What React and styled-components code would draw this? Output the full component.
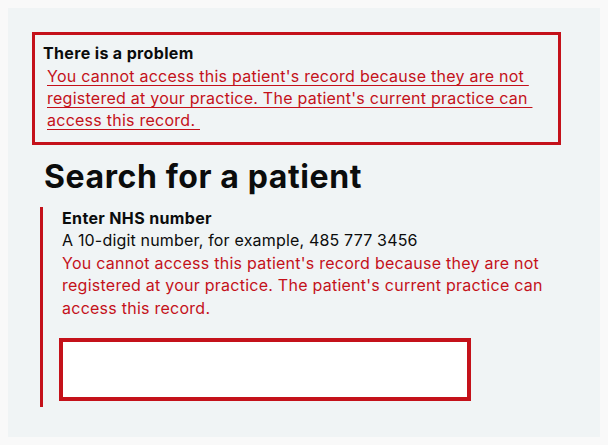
import React from "react";
import styled, { createGlobalStyle } from "styled-components";

const RED = "#c4111a";

const GlobalStyle = createGlobalStyle`
  html, body { background: #f9f9f9; }
  body {
    margin: 8px;
    font-family: Inter, "Liberation Sans", sans-serif;
    color: #0b0c0c;
  }
  * { box-sizing: border-box; }
`;

const Panel = styled.main`
  background: #f0f4f5;
  height: 429px;
  padding: 24px 24px 0 24px;
`;

const ErrorSummary = styled.div`
  width: 529px;
  border: 3px solid ${RED};
  padding: 6px 9px 11px 8px;
`;

const SummaryTitle = styled.h2`
  margin: 0;
  font-size: 16px;
  line-height: 24px;
  font-weight: 700;
  letter-spacing: 0.35px;
`;

const SummaryLink = styled.a`
  display: block;
  margin-left: 4px;
  font-size: 16px;
  line-height: 22px;
  color: ${RED};
  letter-spacing: 0.25px;
  text-decoration: underline;
  text-decoration-thickness: 1px;
  text-underline-offset: 3px;
  white-space: break-spaces;
`;

const Content = styled.div`
  padding-left: 8px;
`;

const Heading = styled.h1`
  margin: 12px 0 10px 4px;
  font-size: 32px;
  line-height: 40px;
  font-weight: 700;
  letter-spacing: 0.6px;
`;

const FormGroup = styled.div`
  border-left: 3px solid ${RED};
  padding: 0 0 6px 16px;
`;

const Label = styled.label`
  display: block;
  padding-left: 3px;
  font-size: 16px;
  line-height: 22.4px;
  font-weight: 700;
  letter-spacing: 0.35px;
`;

const Hint = styled.div`
  padding-left: 3px;
  font-size: 16px;
  line-height: 22.4px;
  letter-spacing: 0.18px;
`;

const ErrorMessage = styled.div`
  padding-left: 3px;
  font-size: 16px;
  line-height: 22.4px;
  letter-spacing: 0.25px;
  color: ${RED};
`;

const Input = styled.input`
  display: block;
  margin-top: 19px;
  width: 412px;
  height: 63px;
  border: 4px solid ${RED};
  background: #fff;
  outline: none;
  font: inherit;
  padding: 0 8px;
`;

const MESSAGE =
  "You cannot access this patient's record because they are not registered at your practice. The patient's current practice can access this record.";

export default function App() {
  return (
    <>
      <GlobalStyle />
      <Panel>
        <ErrorSummary role="alert">
          <SummaryTitle>There is a problem</SummaryTitle>
          <SummaryLink href="#nhs-number">{MESSAGE + " "}</SummaryLink>
        </ErrorSummary>
        <Content>
          <Heading>Search for a patient</Heading>
          <FormGroup>
            <Label htmlFor="nhs-number">Enter NHS number</Label>
            <Hint>A 10-digit number, for example, 485 777 3456</Hint>
            <ErrorMessage>{MESSAGE}</ErrorMessage>
            <Input id="nhs-number" type="text" />
          </FormGroup>
        </Content>
      </Panel>
    </>
  );
}
